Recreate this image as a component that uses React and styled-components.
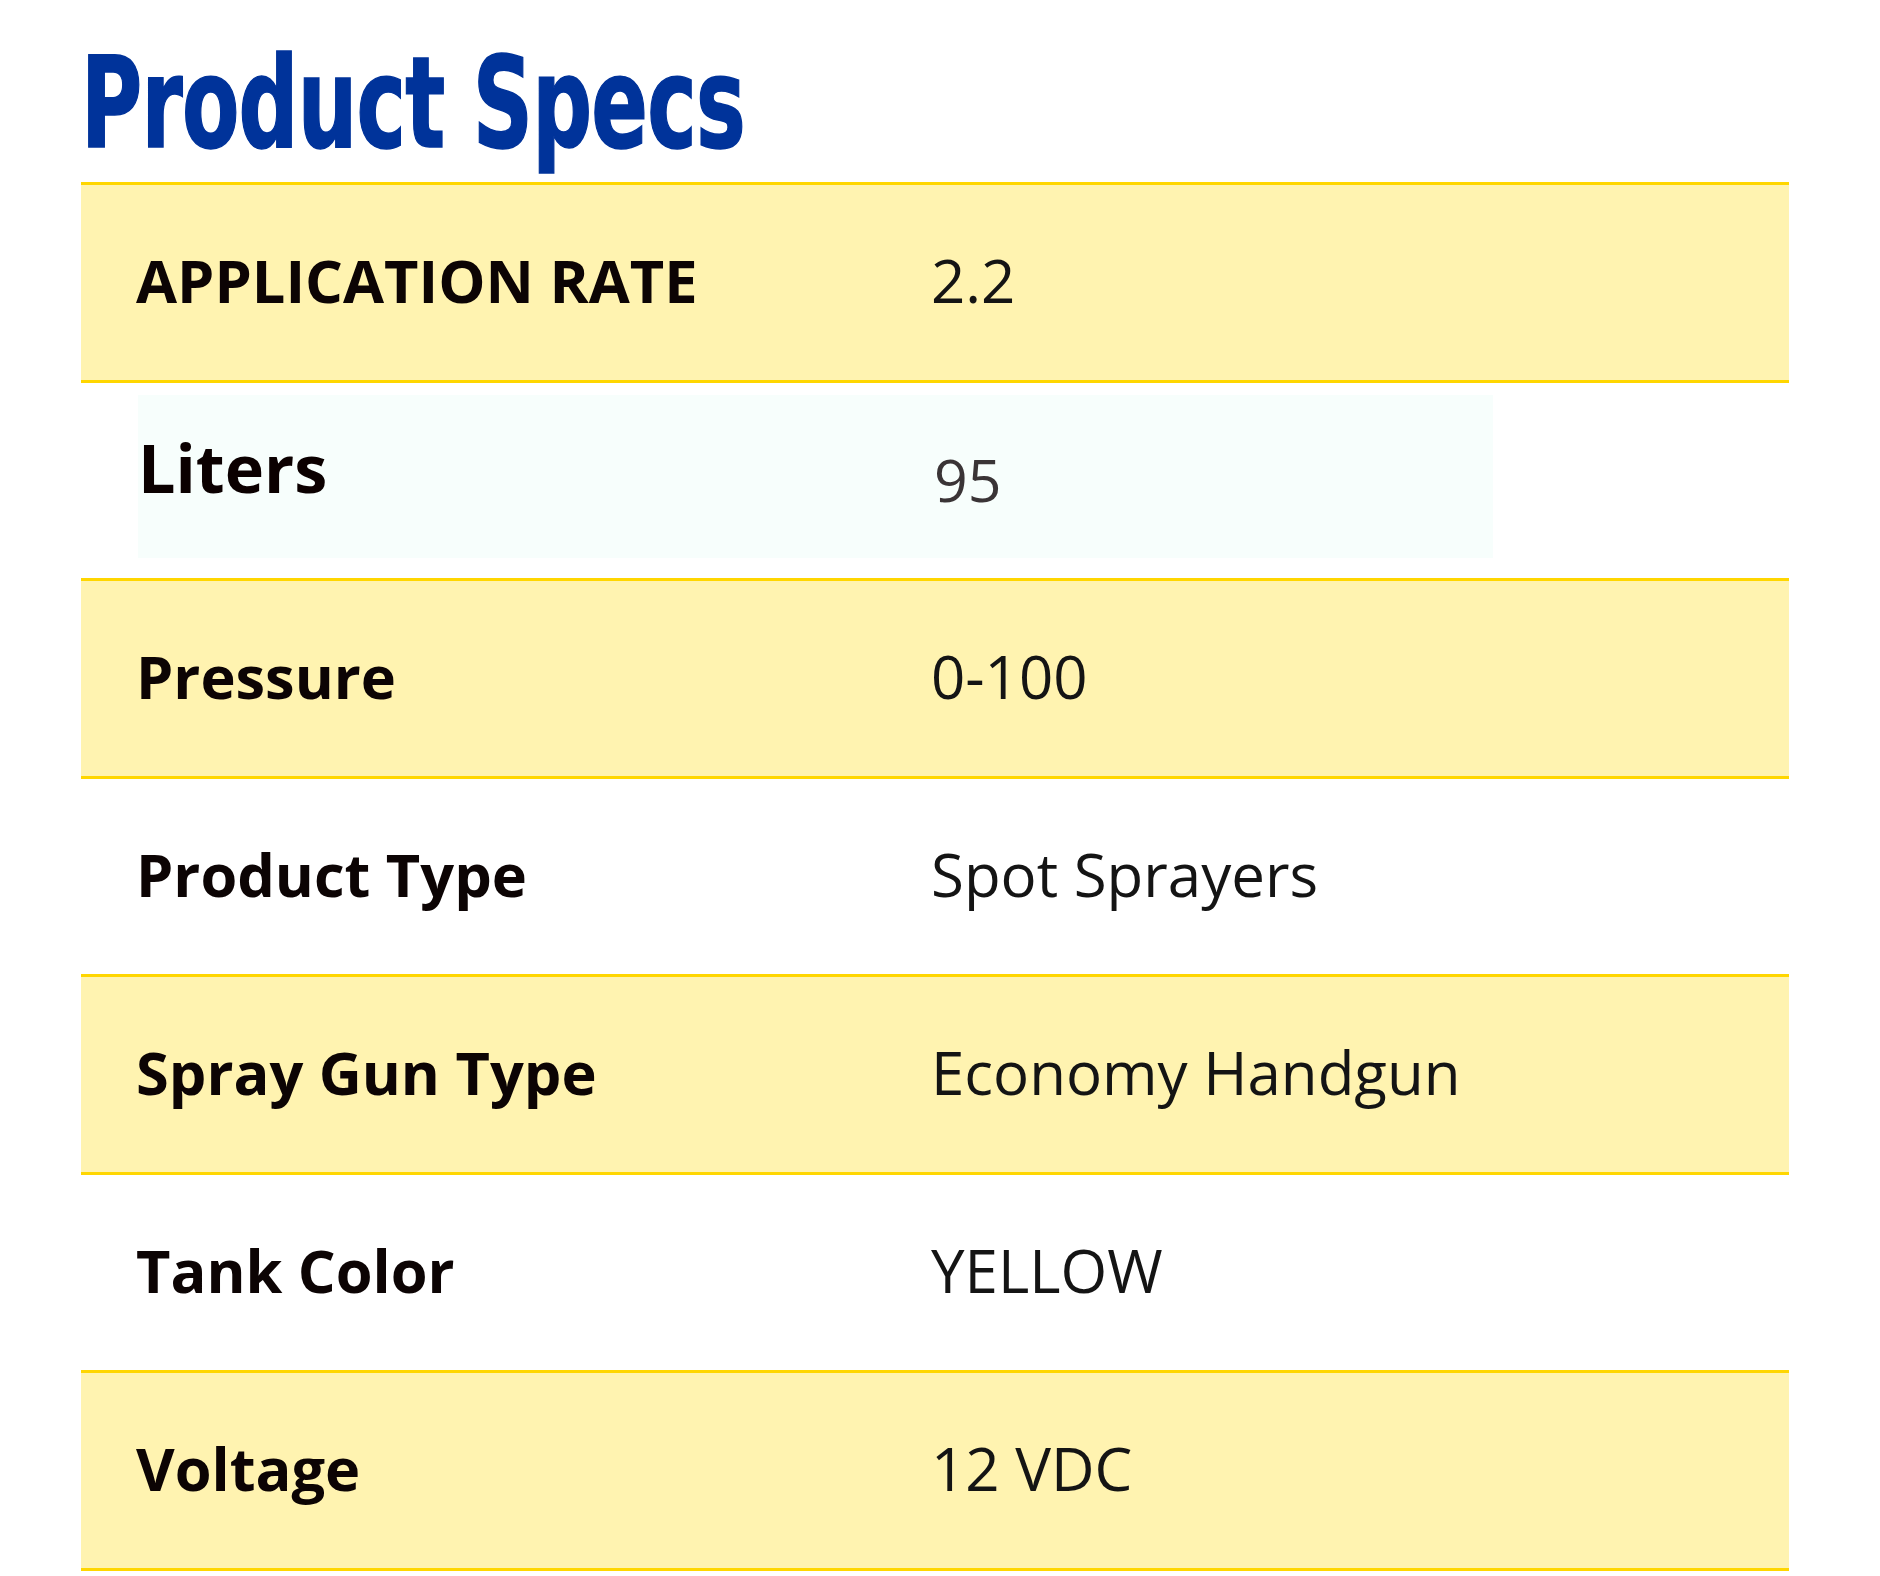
import React from 'react';
import styled, { createGlobalStyle } from 'styled-components';

const GlobalStyle = createGlobalStyle`
    html, body {
        margin: 0;
        padding: 0;
        background: #ffffff;
    }
    body {
        font-family: "Open Sans", "Liberation Sans", sans-serif;
    }
`;

// page + heading
const Page = styled.div`
    padding: 41px 0 0 81px;
    width: 1708px;
`;

const Title = styled.h1`
    margin: 0 0 15px;
    height: 126px;
    font-family: "DejaVu Sans Condensed", "DejaVu Sans", sans-serif;
    font-stretch: condensed;
    font-weight: 700;
    font-size: 126px;
    line-height: 126px;
    color: #00339a;
    white-space: nowrap;
    transform: scaleX(0.737);
    transform-origin: left center;
    letter-spacing: -1px;
    -webkit-text-stroke: 1.5px #00339a;
`;

// spec table
const Specs = styled.div`
    display: flex;
    flex-direction: column;
    border-bottom: 3px solid #ffd600;
`;

const Row = styled.div`
    display: grid;
    grid-template-columns: 795px 1fr;
    align-items: center;
    height: 195px;
    box-sizing: content-box;
    padding: 0 0 0 55px;
    border-top: 3px solid #ffd600;
    background: ${p => (p.$shaded ? '#fff3b0' : '#ffffff')};
`;

const Label = styled.div`
    font-weight: 700;
    font-size: 59.5px;
    color: #0c0404;
    padding-bottom: 6px;
`;

const Value = styled.div`
    font-weight: 400;
    font-size: 60px;
    color: #141414;
    padding-bottom: 6px;
`;

// the "Liters" row holds a pasted block with its own tint and spacing
const PastedRow = styled.div`
    border-top: 3px solid #ffd600;
    padding: 12px 0 0 57px;
    box-sizing: content-box;
    height: 183px;
`;

const PastedBlock = styled.div`
    display: grid;
    grid-template-columns: 796px 1fr;
    align-items: start;
    width: 1355px;
    height: 163px;
    background: #f7fefc;
`;

const PastedLabel = styled.div`
    padding-top: 27px;
    font-weight: 700;
    font-size: 66.5px;
    color: #0b0000;
`;

const PastedValue = styled.div`
    padding-top: 44px;
    font-weight: 400;
    font-size: 59px;
    color: #3a3436;
`;

const specs = [
    { label: 'APPLICATION RATE', value: '2.2' },
    { label: 'Liters', value: '95', pasted: true },
    { label: 'Pressure', value: '0-100' },
    { label: 'Product Type', value: 'Spot Sprayers' },
    { label: 'Spray Gun Type', value: 'Economy Handgun' },
    { label: 'Tank Color', value: 'YELLOW' },
    { label: 'Voltage', value: '12 VDC' },
];

export default function App() {
    return (
        <>
            <GlobalStyle />
            <Page>
                <Title>Product Specs</Title>
                <Specs>
                    {specs.map((s, i) =>
                        s.pasted ? (
                            <PastedRow key={s.label}>
                                <PastedBlock>
                                    <PastedLabel>{s.label}</PastedLabel>
                                    <PastedValue>{s.value}</PastedValue>
                                </PastedBlock>
                            </PastedRow>
                        ) : (
                            <Row key={s.label} $shaded={i % 2 === 0}>
                                <Label>{s.label}</Label>
                                <Value>{s.value}</Value>
                            </Row>
                        )
                    )}
                </Specs>
            </Page>
        </>
    );
}
